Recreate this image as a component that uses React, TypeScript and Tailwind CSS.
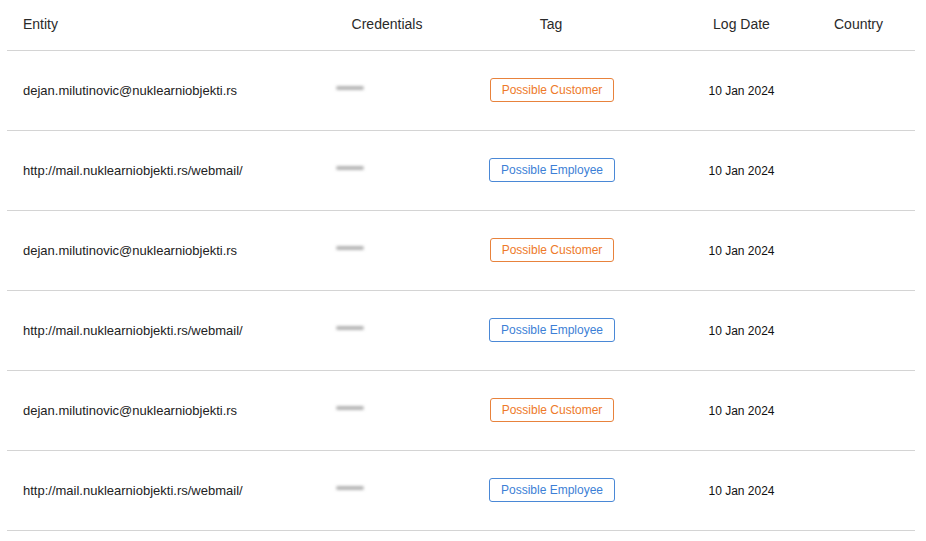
const rows = [
  { entity: "dejan.milutinovic@nuklearniobjekti.rs", tag: "customer" },
  { entity: "http://mail.nuklearniobjekti.rs/webmail/", tag: "employee" },
  { entity: "dejan.milutinovic@nuklearniobjekti.rs", tag: "customer" },
  { entity: "http://mail.nuklearniobjekti.rs/webmail/", tag: "employee" },
  { entity: "dejan.milutinovic@nuklearniobjekti.rs", tag: "customer" },
  { entity: "http://mail.nuklearniobjekti.rs/webmail/", tag: "employee" },
];

const cols = "grid grid-cols-[313px_134px_194px_187px_1fr]";

function Tag({ kind }: { kind: string }) {
  // badge de tag: laranja para cliente, azul para funcionário
  if (kind === "customer") {
    return (
      <span className="inline-flex h-[24px] items-center rounded-[3px] border border-[#e8823c] px-[11px] text-[12px] text-[#ee7a2a]">
        Possible Customer
      </span>
    );
  }
  return (
    <span className="inline-flex h-[24px] items-center rounded-[3px] border border-[#4a88d6] px-[11px] text-[12px] text-[#3d7fd6]">
      Possible Employee
    </span>
  );
}

export default function App() {
  return (
    <div className="min-h-[541px] w-[926px] bg-white pl-[7px] pr-[11px] font-['Liberation_Sans',Arial,sans-serif]">
      {/* cabeçalho */}
      <div className={`${cols} h-[51px] items-center border-b border-[#d4d4d4] pb-[1px] text-[14px] text-[#2a2a2a]`}>
        <div className="pl-4">Entity</div>
        <div className="text-center">Credentials</div>
        <div className="text-center">Tag</div>
        <div className="text-center">Log Date</div>
        <div className="-ml-px">Country</div>
      </div>

      {rows.map((r, i) => (
        <div key={i} className={`${cols} h-[80px] items-center border-b border-[#d4d4d4] text-[13px] text-[#222]`}>
          <div className="pl-4">{r.entity}</div>
          <div className="pl-4">
            {/* credenciais ocultas (borradas) */}
            <div className="-mt-[5px] h-[4px] w-[28px] rounded-full bg-[#b4b4b4] blur-[1.5px]" />
          </div>
          <div className="-mt-[2px] flex justify-center pl-[2px]">
            <Tag kind={r.tag} />
          </div>
          <div className="text-center text-[12px] text-[#111]">10 Jan 2024</div>
          <div />
        </div>
      ))}
    </div>
  );
}
